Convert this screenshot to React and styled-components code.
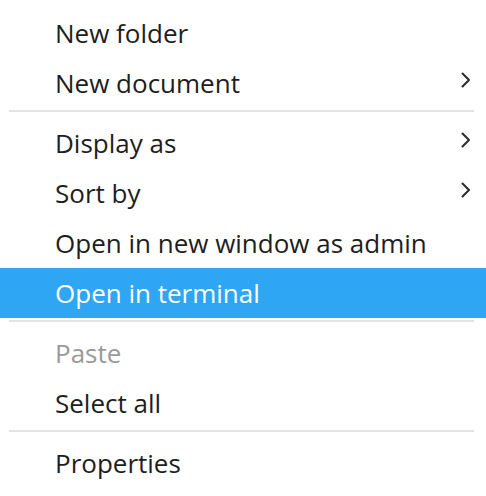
import React from "react";
import styled, { createGlobalStyle } from "styled-components";

const GlobalStyle = createGlobalStyle`
  html, body {
    margin: 0;
    padding: 0;
    background: #ffffff;
  }
`;

const items = [
  { label: "New folder" },
  { label: "New document", submenu: true },
  { separator: true },
  { label: "Display as", submenu: true },
  { label: "Sort by", submenu: true },
  { label: "Open in new window as admin" },
  { label: "Open in terminal", active: true },
  { separator: true },
  { label: "Paste", disabled: true },
  { label: "Select all" },
  { separator: true },
  { label: "Properties" },
];

const Chevron = () => (
  <svg width="10" height="16" viewBox="0 0 10 16" fill="none">
    <polyline
      points="1.5,1.5 8,8 1.5,14.5"
      stroke="#2a2a2a"
      strokeWidth="2"
      strokeLinecap="round"
      strokeLinejoin="round"
    />
  </svg>
);

const ContextMenu = () => (
  <Menu>
    {items.map((item, i) =>
      item.separator ? (
        <Separator key={i} />
      ) : (
        <Item key={i} $active={item.active} $disabled={item.disabled}>
          <Label>{item.label}</Label>
          {item.submenu && (
            <Arrow>
              <Chevron />
            </Arrow>
          )}
        </Item>
      )
    )}
  </Menu>
);

export default function App() {
  return (
    <>
      <GlobalStyle />
      <ContextMenu />
    </>
  );
}

const Menu = styled.div`
  width: 486px;
  height: 496px;
  box-sizing: border-box;
  padding-top: 8px;
  background: #ffffff;
  display: flex;
  flex-direction: column;
  font-family: "Open Sans", "Noto Sans", sans-serif;
`;

const Item = styled.div`
  height: 50px;
  flex-shrink: 0;
  display: flex;
  align-items: center;
  justify-content: space-between;
  padding: 0 15px 0 55px;
  font-size: 26px;
  color: ${({ $active, $disabled }) =>
    $active ? "#ffffff" : $disabled ? "#9a9a9a" : "#1e1e1e"};
  background: ${({ $active }) => ($active ? "#2ea6f4" : "transparent")};
`;

const Label = styled.span`
  white-space: nowrap;
`;

const Arrow = styled.span`
  display: flex;
  align-items: center;
  margin-bottom: 6px;
`;

const Separator = styled.div`
  height: 2px;
  flex-shrink: 0;
  margin: 2px 12px 6px 9px;
  background: #e3e3e3;
`;
